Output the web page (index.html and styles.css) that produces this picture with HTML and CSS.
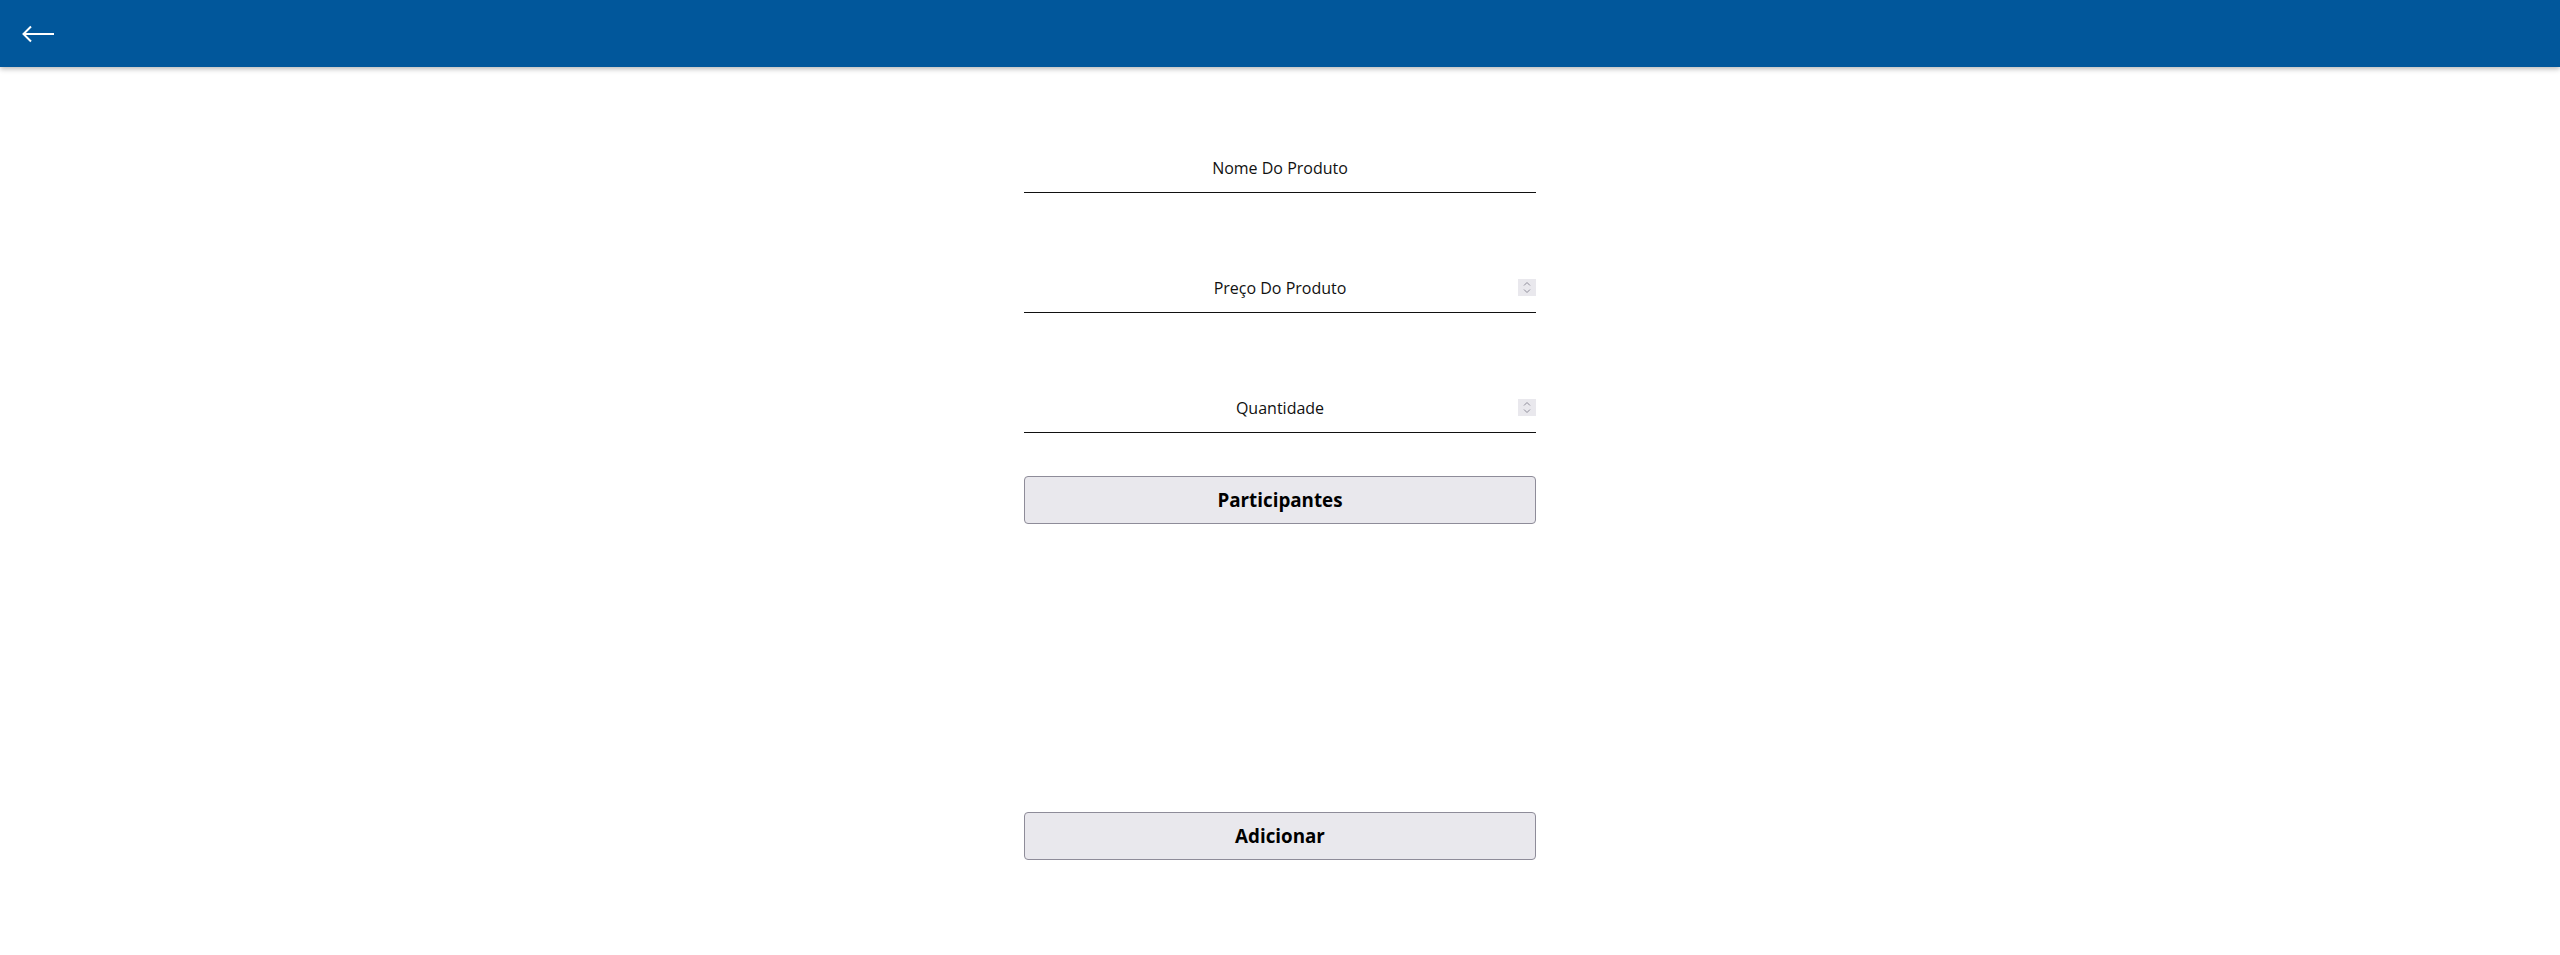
FILE: index.html
```html
<!DOCTYPE html>
<html lang="pt">
<head>
<meta charset="utf-8">
<title>Adicionar Produto</title>
<link rel="stylesheet" href="styles.css">
</head>
<body>
<header class="topbar">
  <button class="back" aria-label="Voltar">
    <svg width="34" height="20" viewBox="0 0 34 20" fill="none" stroke="#ffffff" stroke-width="2" stroke-linecap="square">
      <path d="M32 10H3"/>
      <path d="M10 2.5L2.5 10L10 17.5" stroke-linecap="butt"/>
    </svg>
  </button>
</header>
<main class="form">
  <div class="field first">
    <input class="entry" type="text" placeholder="Nome Do Produto">
  </div>
  <div class="field">
    <input class="entry" type="text" placeholder="Preço Do Produto">
    <span class="spin"><svg width="8" height="13" viewBox="0 0 8 13" fill="none" stroke="#8e8c99" stroke-width="1"><path d="M1 4.5L4 1.5L7 4.5"/><path d="M1 8.5L4 11.5L7 8.5"/></svg></span>
  </div>
  <div class="field">
    <input class="entry" type="text" placeholder="Quantidade">
    <span class="spin"><svg width="8" height="13" viewBox="0 0 8 13" fill="none" stroke="#8e8c99" stroke-width="1"><path d="M1 4.5L4 1.5L7 4.5"/><path d="M1 8.5L4 11.5L7 8.5"/></svg></span>
  </div>
  <button class="btn participants">Participantes</button>
  <button class="btn add">Adicionar</button>
</main>
</body>
</html>
```
FILE: styles.css
```css
* { box-sizing: border-box; }
html, body {
  margin: 0;
  padding: 0;
  background: #ffffff;
  font-family: "Open Sans", "Noto Sans", sans-serif;
  color: #111111;
}
.topbar {
  height: 67px;
  background: #01579b;
  box-shadow: 0 2px 5px rgba(0, 0, 0, 0.28);
  display: flex;
  align-items: center;
  padding-left: 21px;
  position: relative;
  z-index: 1;
}
.back {
  background: none;
  border: 0;
  padding: 0;
  margin: 0;
  display: flex;
  cursor: pointer;
}
.form {
  width: 512px;
  margin: 0 auto;
  padding-top: 81px;
  display: flex;
  flex-direction: column;
}
.field {
  position: relative;
  height: 45px;
  border-bottom: 1px solid #111111;
  margin-top: 75px;
}
.field.first { margin-top: 0; }
.entry {
  width: 100%;
  height: 44px;
  border: 0;
  outline: none;
  background: transparent;
  text-align: center;
  font-family: "Open Sans", "Noto Sans", sans-serif;
  font-size: 16px;
  color: #111111;
  padding: 0 0 4px 0;
}
.entry::placeholder { color: #111111; opacity: 1; }
.spin {
  position: absolute;
  right: 0;
  top: 11px;
  width: 18px;
  height: 17px;
  background: #e9e8ed;
  display: flex;
  align-items: center;
  justify-content: center;
}
.btn {
  height: 48px;
  width: 100%;
  background: #e9e8ed;
  border: 1px solid #8e8c99;
  border-radius: 4px;
  font-family: "Open Sans", "Noto Sans", sans-serif;
  font-weight: 700;
  font-size: 18.8px;
  color: #000000;
  padding: 0 0 1px 0;
}
.participants { margin-top: 43px; }
.add { margin-top: 288px; }
```
